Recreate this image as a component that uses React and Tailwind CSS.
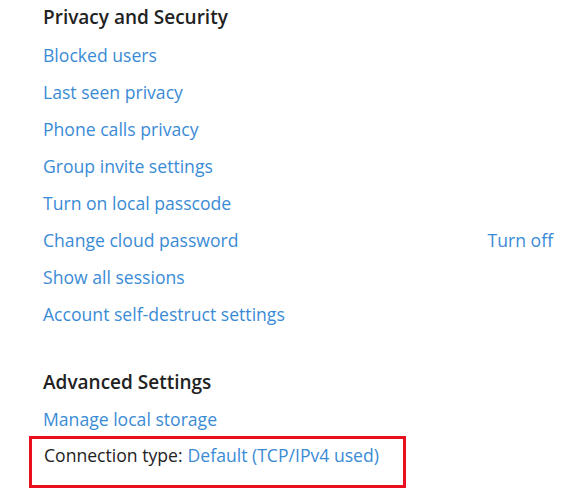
import React from "react";

const privacyLinks = [
  "Blocked users",
  "Last seen privacy",
  "Phone calls privacy",
  "Group invite settings",
  "Turn on local passcode",
  "Change cloud password",
  "Show all sessions",
  "Account self-destruct settings",
];

const App = () => {
  return (
    <div
      className="w-[567px] h-[503px] bg-white overflow-hidden"
      style={{ fontFamily: '"Open Sans", "Noto Sans", sans-serif' }}
    >
      {/* Privacy section */}
      <div className="pl-[43px] pr-[14px]">
        <div className="h-[34px] flex items-center text-[19px] font-semibold text-[#222]">
          Privacy and Security
        </div>
        <div className="mt-[3px]">
          {privacyLinks.map((label) => (
            <div
              key={label}
              className="h-[37px] flex items-center justify-between text-[17.6px] text-[#3a8bd6]"
            >
              <span>{label}</span>
              {label === "Change cloud password" && <span>Turn off</span>}
            </div>
          ))}
        </div>
      </div>

      {/* Advanced section */}
      <div className="pl-[43px] mt-[31px]">
        <div className="h-[37px] flex items-center text-[19px] font-semibold text-[#222]">
          Advanced Settings
        </div>
        <div className="h-[37px] flex items-center text-[17.6px] text-[#3a8bd6]">
          Manage local storage
        </div>
      </div>
      <div className="ml-[29px] mt-[-2px] w-[377px] h-[52px] border-[3px] border-[#e8101f] pl-[12px] pt-[4px] leading-[24px] text-[17.6px]">
        <span className="text-[#222]">Connection type:</span>
        <span className="ml-[5px] text-[#3a8bd6]">Default (TCP/IPv4 used)</span>
      </div>
    </div>
  );
};

export default App;
